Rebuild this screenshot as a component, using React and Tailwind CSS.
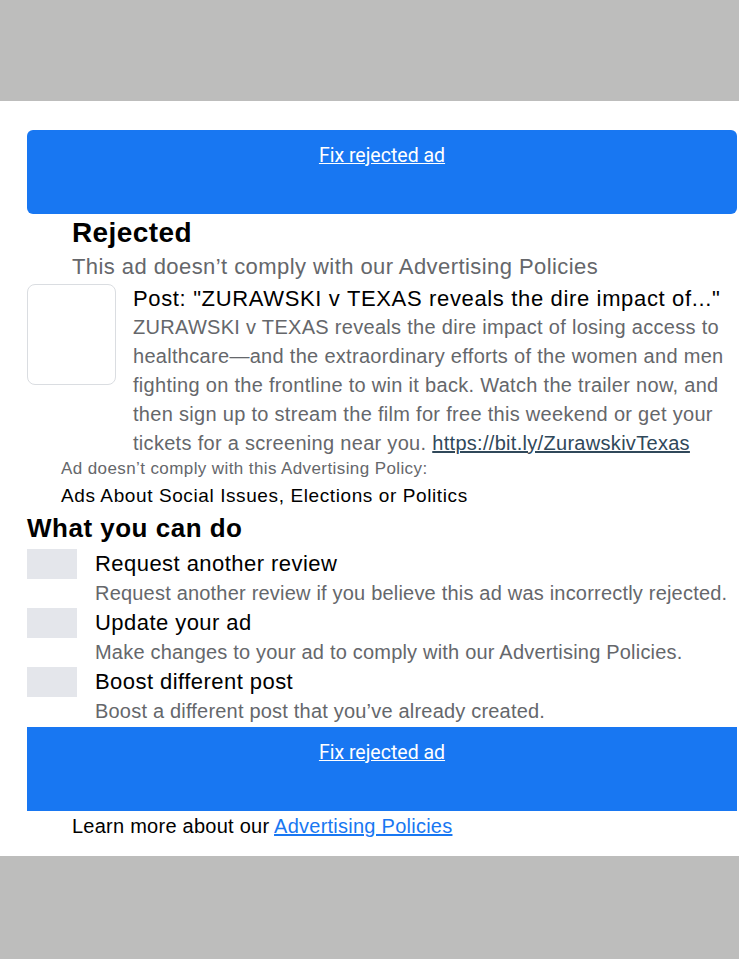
const actions = [
  { title: 'Request another review', desc: 'Request another review if you believe this ad was incorrectly rejected.' },
  { title: 'Update your ad', desc: 'Make changes to your ad to comply with our Advertising Policies.' },
  { title: 'Boost different post', desc: 'Boost a different post that you’ve already created.' },
]

function FixButton({ rounded }) {
  return (
    <div className={`h-[84px] bg-[#1877f2] pt-[14px] text-center ${rounded ? 'rounded-[6px]' : ''}`}>
      <a href="#" className="text-[19.5px] leading-[24px] text-white underline font-['Roboto',sans-serif]">Fix rejected ad</a>
    </div>
  )
}

export default function App() {
  return (
    <div className="min-h-screen bg-[#bdbdbc] pt-[101px] font-['Liberation_Sans',Arial,sans-serif]">
      <div className="bg-white pl-[27px] pr-[2px] pt-[29px] pb-[18px]">
        <FixButton rounded />

        <div className="pl-[45px] mt-[4px]">
          <h1 className="text-[28px] leading-[30px] tracking-[0.4px] font-bold text-black">Rejected</h1>
          <p className="text-[22px] leading-[26px] tracking-[0.43px] text-[#65676b] mt-[6px]">This ad doesn’t comply with our Advertising Policies</p>
        </div>

        <div className="flex items-start gap-[17px] mt-[4px]">
          <div className="w-[89px] h-[101px] shrink-0 rounded-[8px] border border-[#dadde1] bg-white" />
          <div className="mt-[2px] pr-[6px]">
            <p className="text-[22px] leading-[26px] tracking-[0.65px] text-black">Post: "ZURAWSKI v TEXAS reveals the dire impact of..."</p>
            <p className="text-[20px] leading-[29px] tracking-[0.3px] text-[#65676b] mt-[1px]">
              ZURAWSKI v TEXAS reveals the dire impact of losing access to healthcare—and the extraordinary efforts of the women and men fighting on the frontline to win it back. Watch the trailer now, and then sign up to stream the film for free this weekend or get your tickets for a screening near you.{' '}
              <a href="#" className="text-[#30485a] underline">https://bit.ly/ZurawskivTexas</a>
            </p>
          </div>
        </div>

        <div className="pl-[34px] mt-[1px]">
          <p className="text-[17px] leading-[20px] tracking-[0.4px] text-[#65676b]">Ad doesn’t comply with this Advertising Policy:</p>
          <p className="text-[19px] leading-[24px] tracking-[0.6px] text-black mt-[5px]">Ads About Social Issues, Elections or Politics</p>
        </div>

        <h2 className="text-[26px] leading-[30px] tracking-[0.5px] font-bold text-black mt-[5px]">What you can do</h2>

        <div className="mt-[6px]">
          {actions.map(a => (
            <div key={a.title} className="flex items-start gap-[18px]">
              <div className="w-[50px] h-[30px] shrink-0 bg-[#e4e6eb]" />
              <div>
                <p className="text-[22px] leading-[29px] tracking-[0.45px] text-black">{a.title}</p>
                <p className="text-[20px] leading-[30px] tracking-[0.2px] text-[#65676b] whitespace-nowrap">{a.desc}</p>
              </div>
            </div>
          ))}
        </div>

        <div className="mt-[1px]">
          <FixButton />
        </div>

        <p className="pl-[45px] mt-[3px] text-[20px] leading-[24px] tracking-[0.25px] text-black">
          Learn more about our{' '}
          <a href="#" className="text-[#1877f2] underline">Advertising Policies</a>
        </p>
      </div>
    </div>
  )
}
